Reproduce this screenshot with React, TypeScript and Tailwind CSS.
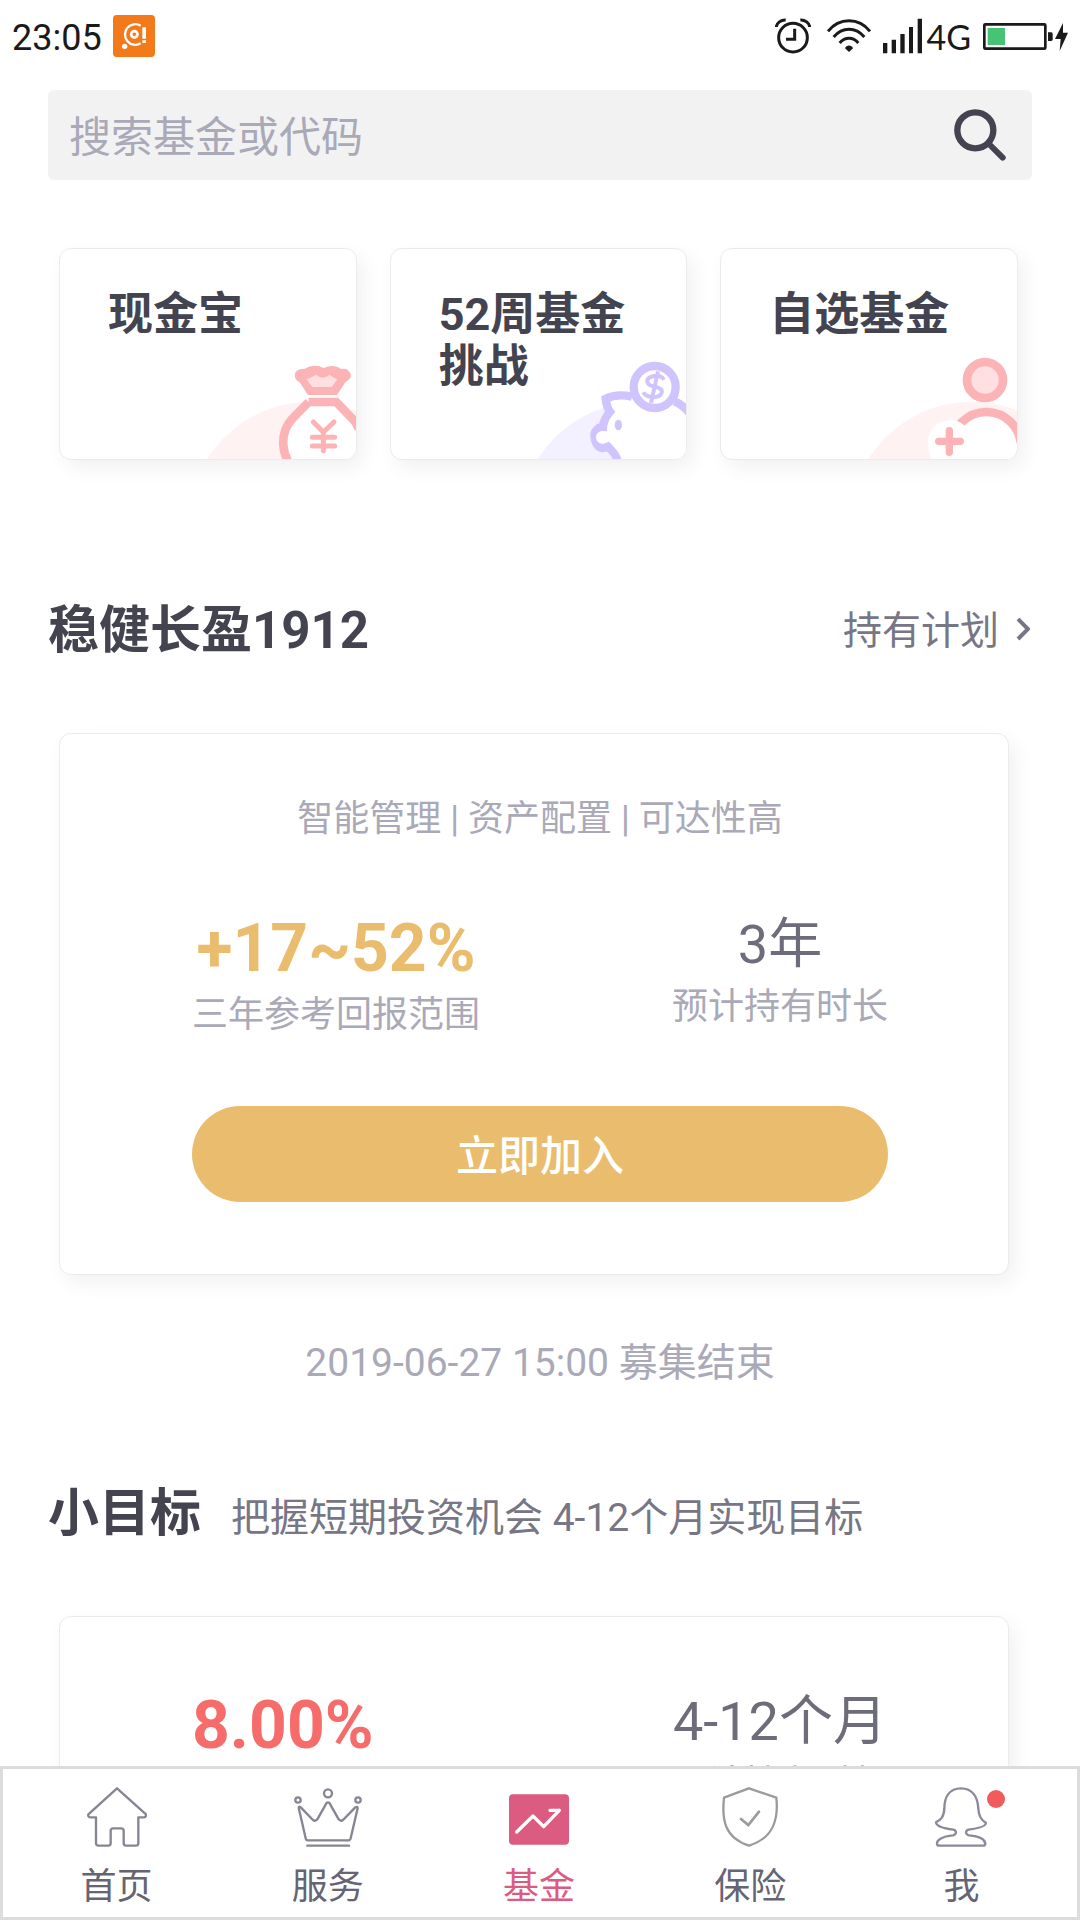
import React, { useState } from 'react';
import clsx from 'clsx';

/**
 * Fund home screen
 *
 * Search box, shortcut cards, featured plan, short term goals
 * and the bottom tab bar.
 */

const TABS = [
  { id: 'home', label: '首页', icon: <HomeIcon /> },
  { id: 'service', label: '服务', icon: <CrownIcon /> },
  { id: 'fund', label: '基金', icon: <FundIcon /> },
  { id: 'insurance', label: '保险', icon: <ShieldIcon /> },
  { id: 'me', label: '我', icon: <MeIcon />, badge: true },
];

const SHORTCUTS = [
  { title: '现金宝', art: <MoneyBagArt /> },
  { title: '52周基金挑战', art: <PiggyArt /> },
  { title: '自选基金', art: <WatchlistArt /> },
];

/* Status bar icons */

function AppBadge() {
  return (
    <svg viewBox="339 45 126 126" className="size-[42px]" fill="none">
      <rect x="339" y="45" width="126" height="126" rx="11" fill="#f27a1a" />
      <path d="M422 77 A31 31 0 1 0 422 130" stroke="#fff" strokeWidth="7" />
      <circle cx="403" cy="103" r="9.500" stroke="#fff" strokeWidth="8" />
      <path d="M427 82h11v34h-11z M427 121h11v8h-11z" fill="#fff" />
      <circle cx="374" cy="139" r="8" fill="#fff" />
    </svg>
  );
}

function AlarmIcon() {
  return (
    <svg viewBox="102 51 108 114" className="h-[38px] w-9" fill="none" stroke="#1a1a1a" strokeWidth="9">
      <circle cx="156" cy="113" r="43" />
      <path d="M161 86v32h-26" />
      <path d="M106 81c1-12 14-22 28-21M206 81c-1-12-14-22-28-21" />
    </svg>
  );
}

function WifiIcon() {
  return (
    <svg viewBox="261 51 132 114" className="h-[38px] w-11" fill="none" stroke="#1a1a1a" strokeWidth="9">
      <path d="M264 94c34-42 92-42 126 0" />
      <path d="M281 111c26-31 66-31 92 0" />
      <path d="M299 129c16-19 40-19 56 0" />
      <path d="M315 145c4-11 20-11 24 0l-12 11z" fill="#1a1a1a" stroke="none" />
    </svg>
  );
}

function SignalIcon() {
  return (
    <svg viewBox="431 51 117 114" className="h-[38px] w-[39px]" fill="#1a1a1a">
      <path d="M431 129h13v31h-13zM457 119h13v41h-13zM483 102h13v58h-13zM509 81h12v79h-12zM535 56h13v104h-13z" />
    </svg>
  );
}

function BatteryIcon() {
  return (
    <svg viewBox="726 51 255 114" className="h-[38px] w-[85px]">
      <rect x="730" y="73" width="183" height="73" rx="3" fill="none" stroke="#1a1a1a" strokeWidth="8" />
      <rect x="740" y="84" width="52" height="51" fill="#46c474" />
      <path d="M921 97h10q4 0 4 5v16q0 5-4 5h-10z" fill="#1a1a1a" />
      <path d="M966 69L942 117h17l-3 36 25-55h-15z" fill="#1a1a1a" />
    </svg>
  );
}

/* Shortcut card art */

function MoneyBagArt() {
  return (
    <svg viewBox="459 378 486 309" className="absolute right-0 bottom-0 h-[103px] w-[162px]" fill="none">
      <circle cx="807" cy="880" r="364" fill="#fff2f2" />
      <path d="M803 516L752 568Q724 600 727 650L738 700H980V590L936 566L886 516Z" fill="#fff" />
      <path
        d="M803 516H886L934 566Q946 577 954 597M803 516L752 568Q724 600 727 645Q728 668 740 692"
        stroke="#fbb3b6"
        strokeWidth="26"
      />
      <path
        d="M801 495H888L914 455Q932 448 929 433Q922 412 901 417Q880 400 848 414Q818 399 790 417Q765 415 761 434Q761 450 776 457Z"
        fill="#fbb3b6"
      />
      <path d="M797 448Q812 443 824 434Q835 442 846 443Q857 442 866 434Q876 443 889 448L872 471H814Z" fill="#ffdfe0" />
      <path
        d="M817 576L847 606L879 576M847 606V662M814 622H881M814 648H881"
        stroke="#fbb3b6"
        strokeWidth="15"
        strokeLinecap="round"
      />
    </svg>
  );
}

function PiggyArt() {
  return (
    <svg viewBox="462 378 486 309" className="absolute right-0 bottom-0 h-[103px] w-[162px]" fill="none">
      <circle cx="812" cy="880" r="364" fill="#f3f0ff" />
      <path
        d="M748 696Q742 678 722 664L712 652Q690 660 680 642Q668 620 682 600L697 596Q700 570 718 546L704 503Q740 491 790 502L920 512Q950 528 970 560V700Z"
        fill="#fff"
      />
      <path
        d="M742 692Q742 678 714 650Q690 660 680 642Q664 610 686 594L699 592Q700 568 720 545Q710 532 707 506Q740 490 786 500M914 514Q938 524 958 548"
        stroke="#cfc4fd"
        strokeWidth="25"
      />
      <circle cx="697" cy="622" r="19" fill="#fff" />
      <ellipse cx="745" cy="585" rx="11" ry="16" fill="#cfc4fd" />
      <circle cx="854" cy="471" r="63" fill="#fff" stroke="#cfc4fd" strokeWidth="25" />
      <path
        d="M882 449Q873 434 852 438Q829 442 832 456Q835 467 854 470Q879 475 875 488Q869 503 845 501Q825 499 820 487M864 424L843 519"
        stroke="#cfc4fd"
        strokeWidth="12"
      />
    </svg>
  );
}

function WatchlistArt() {
  return (
    <svg viewBox="465 378 486 309" className="absolute right-0 bottom-0 h-[103px] w-[162px]" fill="none">
      <circle cx="815" cy="880" r="365" fill="#fff2f2" />
      <circle cx="859" cy="650" r="104" fill="#fff" stroke="#fbb3b6" strokeWidth="26" />
      <path d="M748 570Q774 570 793 586L860 640V700H700Q684 670 684 633Q688 578 748 570Z" fill="#fff" />
      <path d="M780 640H951V700H760Z" fill="#fff" />
      <circle cx="855" cy="450" r="54" fill="#ffdfe0" stroke="#fbb3b6" strokeWidth="26" />
      <path d="M748 602V667M716 634H781" stroke="#fbb3b6" strokeWidth="22" strokeLinecap="round" />
    </svg>
  );
}

/* Tab icons */

function HomeIcon() {
  return (
    <svg viewBox="261 141 180 180" className="size-[60px]" fill="none" stroke="#858593" strokeWidth="7" strokeLinejoin="round">
      <path d="M351 145L438 223Q439 232 431 232H415V309Q415 317 408 317H378Q371 317 371 309V272Q371 265 363 265H340Q332 265 332 272V309Q332 317 325 317H296Q288 317 288 309V232H271Q263 231 265 223Z" />
    </svg>
  );
}

function CrownIcon() {
  return (
    <svg viewBox="878 141 204 180" className="h-[60px] w-[68px]" fill="none" stroke="#858593" strokeWidth="7" strokeLinejoin="round">
      <path d="M892 203Q893 197 899 203L935 240Q942 245 948 238L975 190Q980 184 985 190L1012 238Q1018 245 1025 240L1061 203Q1069 197 1069 205L1048 295Q1046 301 1040 301H920Q914 301 913 295Z" />
      <circle cx="980" cy="160" r="12" />
      <circle cx="890" cy="180" r="8" />
      <circle cx="1070" cy="180" r="8" />
      <path d="M918 317H1043" strokeLinecap="round" />
    </svg>
  );
}

function FundIcon() {
  return (
    <svg viewBox="387 141 180 180" className="size-[60px]" fill="none">
      <rect x="387" y="163" width="180" height="151" rx="12" fill="#dc5b81" />
      <path
        d="M410 276L459 228L491 260L538 211M510 211H538"
        stroke="#fff"
        strokeWidth="10"
        strokeLinecap="round"
        strokeLinejoin="round"
      />
    </svg>
  );
}

function ShieldIcon() {
  return (
    <svg viewBox="121 141 180 180" className="size-[60px]" fill="none" stroke="#9b9b9b" strokeWidth="7">
      <path d="M208 145L290 173C297 238 282 294 208 317C134 294 126 238 133 173Z" />
      <path d="M184 237L206 255L238 215" strokeWidth="8" strokeLinecap="round" />
    </svg>
  );
}

function MeIcon() {
  return (
    <svg viewBox="756 141 180 180" className="size-[60px]" fill="none" stroke="#8b8a99" strokeWidth="7" strokeLinejoin="round">
      <path d="M846 145C812 145 796 170 796 206C795 232 784 240 771 247C772 260 800 266 823 269Q831 271 831 278Q829 286 815 287C790 290 772 300 774 312Q775 317 781 317H912Q918 317 919 312C919 298 900 290 877 287Q863 286 861 278Q861 271 869 269C892 266 920 260 921 249C907 240 899 230 898 206C896 170 880 145 846 145Z" />
    </svg>
  );
}

interface MetricProps {
  value: string;
  label?: string;
  valueClassName: string;
}

function Metric({ value, label, valueClassName }: MetricProps) {
  return (
    <div className="flex flex-col items-center">
      <p className={valueClassName}>{value}</p>
      {label && <p className="text-[36px] leading-[48px] text-[#aaa9b7]">{label}</p>}
    </div>
  );
}

function Card({ className, children }: { className?: string; children: React.ReactNode }) {
  return (
    <div
      className={clsx(
        'rounded-[12px] border border-[#ebebeb] bg-white shadow-[6px_8px_20px_rgba(0,0,0,0.06)]',
        className
      )}
    >
      {children}
    </div>
  );
}

export default function App() {
  const [query, setQuery] = useState('');
  const [activeTab, setActiveTab] = useState('fund');

  return (
    <div className="flex h-screen flex-col overflow-hidden bg-white text-[#444350] [font-family:Roboto,'Noto_Sans_CJK_SC',sans-serif]">
      {/* Status bar */}
      <header className="flex h-[72px] shrink-0 items-center justify-between px-3 text-[36px] text-[#1a1a1a]">
        <div className="flex items-center gap-[11px]">
          <span className="pt-1">23:05</span>
          <AppBadge />
        </div>
        <div className="flex items-center">
          <AlarmIcon />
          <span className="ml-4">
            <WifiIcon />
          </span>
          <span className="ml-3">
            <SignalIcon />
          </span>
          <span className="ml-1 text-[34px] [font-family:Lato,sans-serif]">4G</span>
          <span className="ml-3">
            <BatteryIcon />
          </span>
        </div>
      </header>

      <main className="min-h-0 flex-1 overflow-y-auto px-12 [scrollbar-width:none]">
        {/* Search */}
        <form
          className="mt-[18px] flex h-[90px] items-center rounded-md bg-[#f2f2f2] pr-[26px] pl-[21px]"
          onSubmit={(e) => e.preventDefault()}
        >
          <input
            type="text"
            aria-label="搜索基金或代码"
            placeholder="搜索基金或代码"
            value={query}
            onChange={(e) => setQuery(e.target.value)}
            className="h-full min-w-0 flex-1 bg-transparent pt-1 text-[42px] outline-none placeholder:text-[#aaa9b7]"
          />
          <button type="submit" aria-label="搜索">
            <svg viewBox="641 329 156 156" className="size-[52px]" fill="none" stroke="#444350">
              <circle cx="705" cy="393" r="54" strokeWidth="19" />
              <path d="M746 434L787 475" strokeWidth="18" strokeLinecap="round" />
            </svg>
          </button>
        </form>

        {/* Shortcuts */}
        <div className="mt-[68px] mr-[14px] ml-[11px] grid grid-cols-3 gap-[33px]">
          {SHORTCUTS.map((item) => (
            <Card key={item.title} className="relative h-[212px] overflow-hidden">
              <a href="#" className="block h-full pt-10 pr-10 pl-12">
                <h3 className="text-[45px] leading-[52px] font-bold">{item.title}</h3>
                {item.art}
              </a>
            </Card>
          ))}
        </div>

        {/* Featured plan */}
        <div className="mt-[141px] flex items-center justify-between">
          <h2 className="text-[51px] leading-[60px] font-bold">稳健长盈1912</h2>
          <a href="#" className="flex items-center gap-[17px] pr-[2px] text-[39px] leading-[58px] text-[#777684]">
            持有计划
            <svg viewBox="0 0 14 26" className="h-[26px] w-[14px]" fill="none" stroke="#777684" strokeWidth="4">
              <path d="M2 1L12 11L2 21" />
            </svg>
          </a>
        </div>

        <Card className="mt-[72px] mr-[23px] ml-[11px] pt-[61px] pr-[120px] pb-[72px] pl-[132px]">
          <p className="text-center text-[36px] leading-[48px] text-[#aaa9b7]">智能管理 | 资产配置 | 可达性高</p>
          <div className="mt-16 flex h-[199px] items-start justify-between">
            <Metric
              value="+17~52%"
              label="三年参考回报范围"
              valueClassName="text-[66px] leading-[84px] font-bold text-[#e9bd6d]"
            />
            <Metric value="3年" label="预计持有时长" valueClassName="text-[54px] leading-[76px] text-[#6d6c7a]" />
          </div>
          <button
            type="button"
            className="block h-24 w-full rounded-full bg-[#e9bd6d] pt-1 text-[42px] font-medium text-white"
          >
            立即加入
          </button>
        </Card>
        <p className="mt-[58px] text-center text-[39px] leading-[60px] text-[#aaa9b7]">2019-06-27 15:00 募集结束</p>

        {/* Short term goals */}
        <div className="mt-[91px] flex items-baseline gap-[30px]">
          <h2 className="text-[51px] leading-[60px] font-bold">小目标</h2>
          <p className="text-[39px] leading-[60px] text-[#777684]">把握短期投资机会 4-12个月实现目标</p>
        </div>

        <Card className="mt-[68px] mr-[23px] ml-[11px] pt-[67px] pr-[120px] pb-[72px] pl-[132px]">
          <div className="flex items-start justify-between">
            <Metric value="8.00%" valueClassName="text-[66px] leading-[84px] font-bold text-[#f56c6b]" />
            <Metric value="4-12个月" label="预计持有时长" valueClassName="text-[54px] leading-[76px] text-[#6d6c7a]" />
          </div>
        </Card>
      </main>

      {/* Tab bar */}
      <nav className="flex h-[154px] shrink-0 border-3 border-[#dcdcdc] bg-white pt-[18px] pr-[10px] pl-[8px]">
        {TABS.map((tab) => (
          <button
            key={tab.id}
            type="button"
            onClick={() => setActiveTab(tab.id)}
            className={clsx(
              'flex flex-1 flex-col items-center gap-4 text-[36px] leading-[48px]',
              activeTab === tab.id ? 'text-[#dc5b81]' : 'text-[#656472]'
            )}
          >
            <span className="relative">
              {tab.icon}
              {tab.badge && <span className="absolute top-[3px] -right-[14px] size-[18px] rounded-full bg-[#f15b5b]" />}
            </span>
            {tab.label}
          </button>
        ))}
      </nav>
    </div>
  );
}
